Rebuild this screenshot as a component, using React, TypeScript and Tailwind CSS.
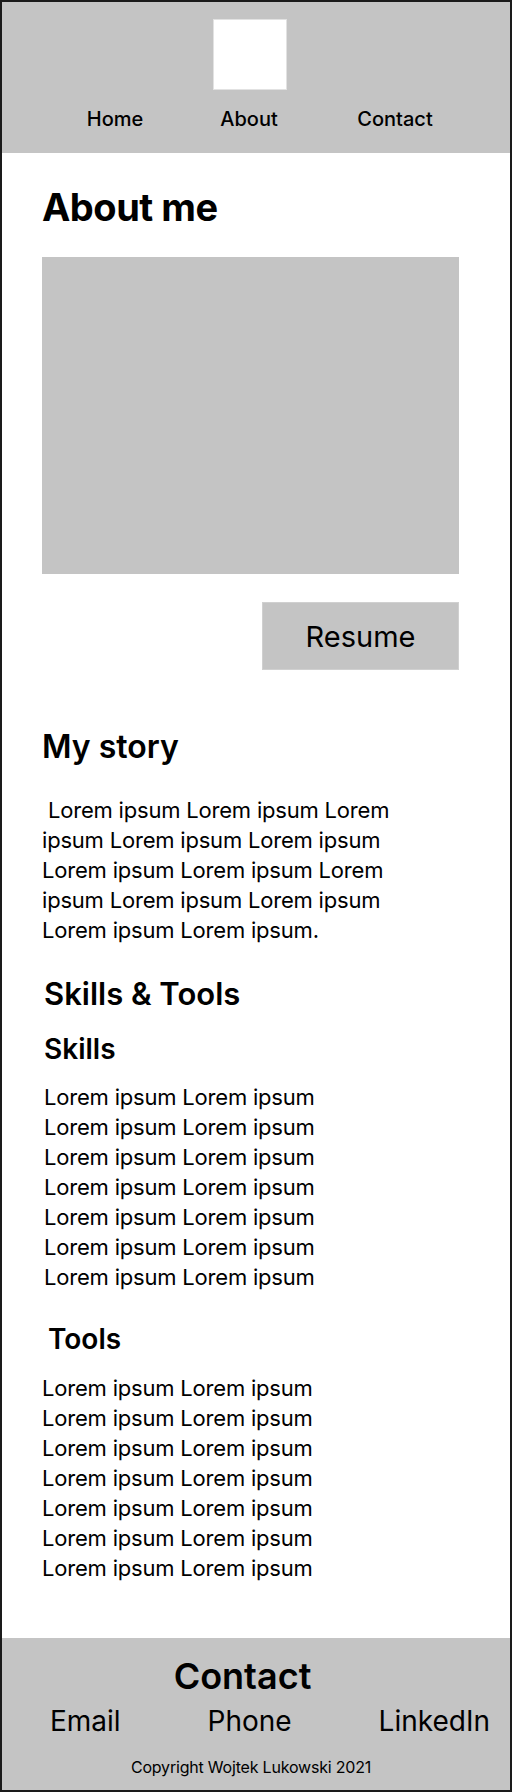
import React from "react";

const font = { fontFamily: "Inter, 'Noto Sans', sans-serif" };

export default function App() {
  const lorem2 = Array.from({ length: 7 });
  return (
    <div
      className="w-[512px] h-[1792px] border-2 border-[#1a1a1a] bg-white flex flex-col text-black overflow-hidden"
      style={font}
    >
      <header className="h-[151px] bg-[#c4c4c4] flex flex-col pt-[17px] shrink-0">
        <div className="ml-[211px] w-[74px] h-[71px] bg-white border border-[#e2e2e2]" />
        <nav className="mt-[17px] w-full flex pl-[73px] text-[20px] leading-[24px] font-medium">
          <div className="w-[80px] text-center">Home</div>
          <div className="w-[80px] text-center ml-[54px]">About</div>
          <div className="w-[80px] text-center ml-[66px]">Contact</div>
        </nav>
      </header>

      <main className="pl-[40px] flex flex-col">
        <h1 className="mt-[35px] text-[38px] leading-none font-bold tracking-[-0.5px]">About me</h1>
        <div className="mt-[31px] w-[417px] h-[317px] bg-[#c4c4c4]" />
        <div className="mt-[28px] self-start ml-[220px] w-[197px] h-[68px] bg-[#c4c4c4] border border-[#d0d0d0] flex items-center justify-center text-[29px] leading-none">
          Resume
        </div>
        <h2 className="mt-[61px] text-[32px] leading-none font-semibold">My story</h2>
        <p className="mt-[32px] text-[22px] leading-[30px] tracking-[-0.2px]">
          &nbsp;Lorem ipsum Lorem ipsum Lorem
          <br />
          ipsum Lorem ipsum Lorem ipsum
          <br />
          Lorem ipsum Lorem ipsum Lorem
          <br />
          ipsum Lorem ipsum Lorem ipsum
          <br />
          Lorem ipsum Lorem ipsum.
        </p>
        <h2 className="mt-[33px] ml-[2px] text-[31px] leading-none font-semibold">Skills &amp; Tools</h2>
        <h3 className="mt-[26px] ml-[2px] text-[28px] leading-none font-semibold">Skills</h3>
        <div className="mt-[19px] ml-[2px] text-[22px] leading-[30px] tracking-[-0.2px]">
          {lorem2.map((_, i) => (
            <div key={i}>Lorem ipsum Lorem ipsum</div>
          ))}
        </div>
        <h3 className="mt-[33px] ml-[6px] text-[28px] leading-none font-semibold">Tools</h3>
        <div className="mt-[20px] text-[22px] leading-[30px] tracking-[-0.2px]">
          {lorem2.map((_, i) => (
            <div key={i}>Lorem ipsum Lorem ipsum</div>
          ))}
        </div>
      </main>

      <footer className="mt-auto h-[152px] shrink-0 bg-[#c4c4c4] flex flex-col pt-[20px]">
        <div className="text-center pr-[27px] text-[36px] leading-none font-semibold">Contact</div>
        <div className="mt-[13px] flex justify-between pl-[48px] pr-[20px] text-[28px] leading-none">
          <span>Email</span>
          <span>Phone</span>
          <span>LinkedIn</span>
        </div>
        <div className="mt-[24px] text-center pr-[10px] text-[16px] leading-none tracking-[-0.2px]">
          Copyright Wojtek Lukowski 2021
        </div>
      </footer>
    </div>
  );
}
